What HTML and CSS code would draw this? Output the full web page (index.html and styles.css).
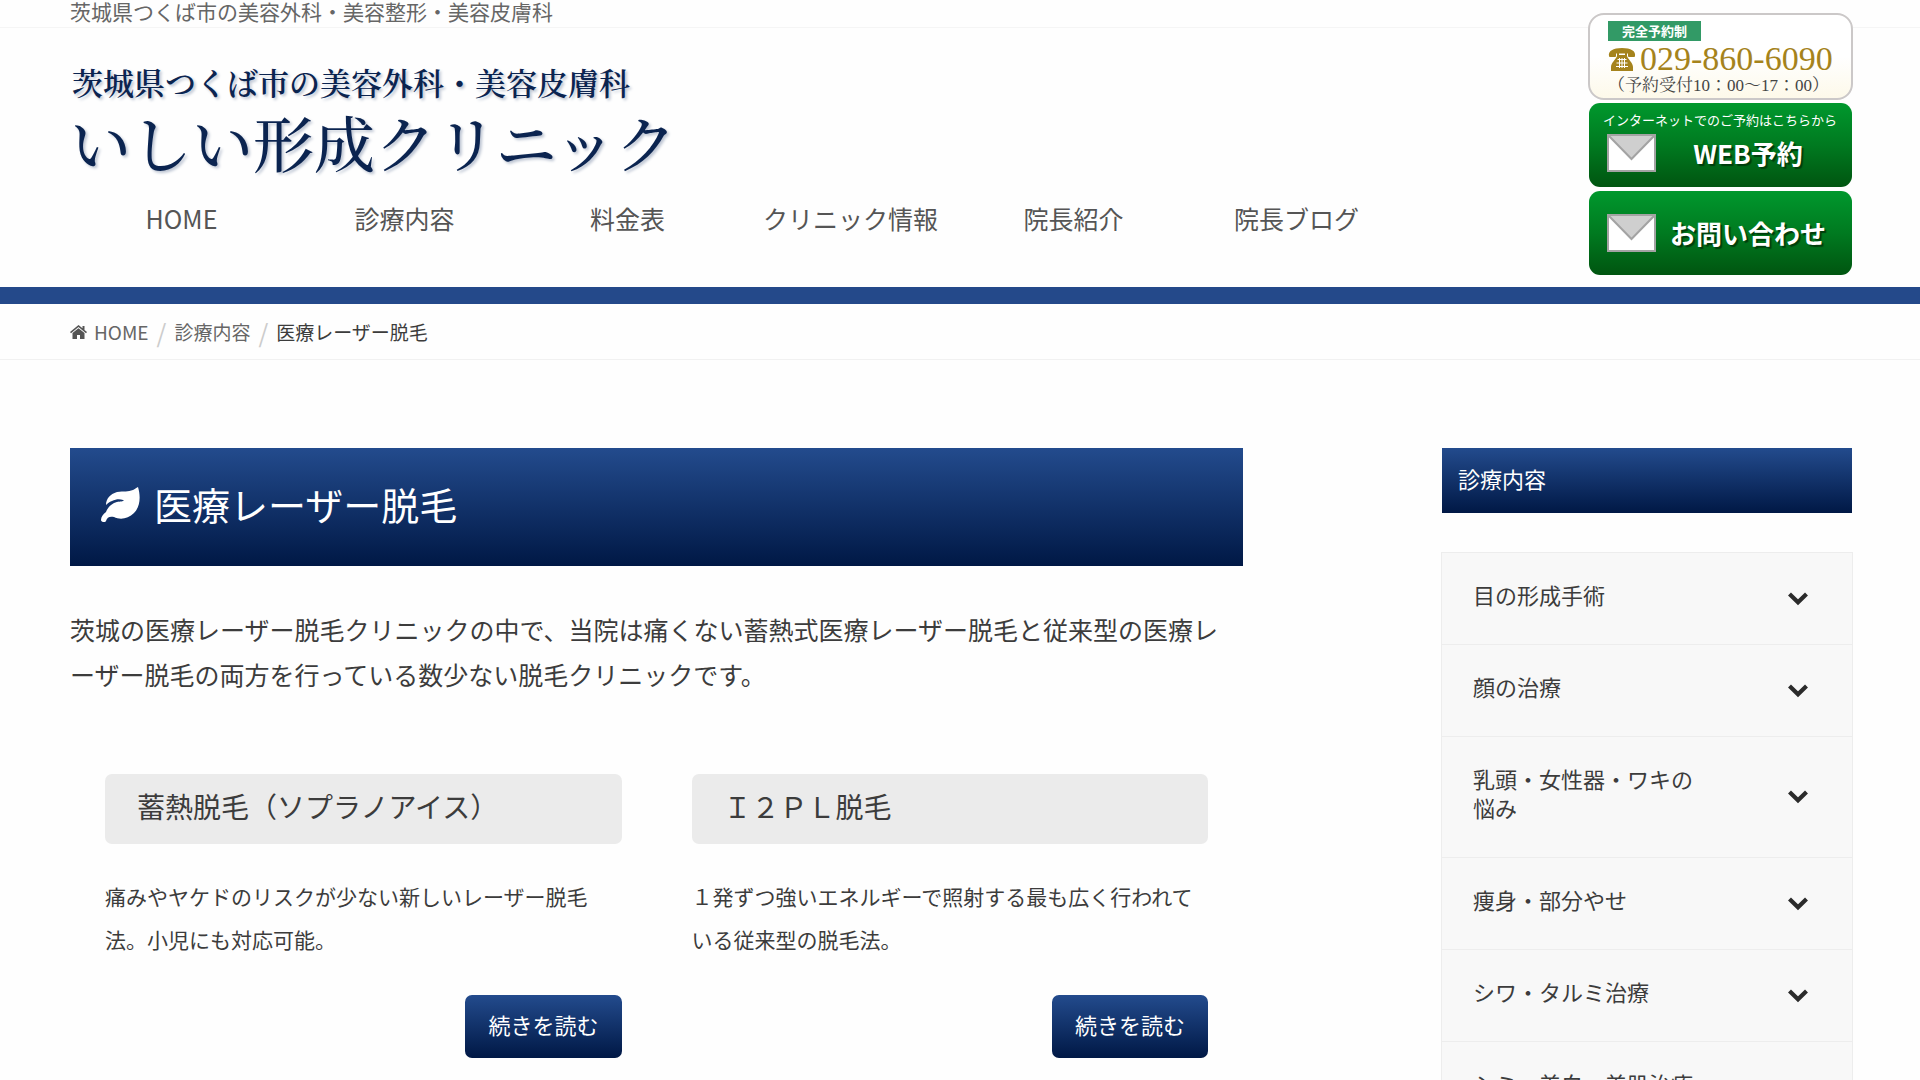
FILE: index.html
```html
<!DOCTYPE html>
<html lang="ja">
<head>
<meta charset="utf-8">
<meta name="viewport" content="width=device-width, initial-scale=1">
<title>医療レーザー脱毛 | いしい形成クリニック</title>
<link rel="stylesheet" href="styles.css">
</head>
<body>
<svg class="sprite" aria-hidden="true">
  <symbol id="chevron" viewBox="0 0 20 14"><path d="M1.500 2L10 10.300L18.500 2" fill="none" stroke="currentColor" stroke-width="4.200"/></symbol>
  <symbol id="envelope" viewBox="0 0 49 38"><rect x="1" y="1" width="47" height="36" fill="#fff" stroke="#a3a3a3" stroke-width="2"/><path d="M2 2H47L24.500 25z" fill="#cfcfcf"/><path d="M2 2L24.500 25L47 2" fill="none" stroke="#a3a3a3" stroke-width="2"/></symbol>
</svg>
<header class="site-header">
  <p class="tagline">茨城県つくば市の美容外科・美容整形・美容皮膚科</p>
  <div class="masthead">
    <a class="logo" href="#">
      <span class="logo-lead">茨城県つくば市の美容外科・美容皮膚科</span>
      <span class="logo-name">いしい形成クリニック</span>
    </a>
    <nav class="global-nav">
      <a href="#">HOME</a>
      <a href="#">診療内容</a>
      <a href="#">料金表</a>
      <a href="#">クリニック情報</a>
      <a href="#">院長紹介</a>
      <a href="#">院長ブログ</a>
    </nav>
  </div>
  <div class="contact">
    <a class="phone" href="tel:029-860-6090">
      <span class="phone-badge">完全予約制</span>
      <span class="phone-number">
        <svg width="28" height="23" viewBox="0 0 28 23" aria-hidden="true"><path d="M1 8C0 3 5 0 14 0s14 3 13 8c0 1-1 1-2 1h-3c-1 0-2 0-2-1V5.500H8V8c0 1-1 1-2 1H3C2 9 1 9 1 8z" fill="#a5831c"/><path d="M9 4h2v3h6V4h2v4c1 3 6 7 6 11v4H3v-4c0-4 5-8 6-11z" fill="#a5831c"/><path d="M9.500 11.500h9M8.500 15h11M8 18.500h12M11.500 10v10M14 10v10M16.500 10v10" stroke="#fff" fill="none"/></svg>
        029-860-6090
      </span>
      <span class="phone-hours">（予約受付10：00～17：00）</span>
    </a>
    <a class="banner" href="#">
      <span class="banner-note">インターネットでのご予約はこちらから</span>
      <span class="banner-label"><svg width="49" height="38" aria-hidden="true"><use href="#envelope"/></svg><span class="banner-text">WEB予約</span></span>
    </a>
    <a class="banner" href="#">
      <span class="banner-label"><svg width="49" height="38" aria-hidden="true"><use href="#envelope"/></svg><span class="banner-text">お問い合わせ</span></span>
    </a>
  </div>
</header>
<nav class="breadcrumb" aria-label="パンくず">
  <a href="#"><svg width="17" height="14" viewBox="0 0 17 14" aria-hidden="true"><path d="M8.500 0L0 7l1 1.200L8.500 2l7.500 6.200L17 7l-2.500-2V1h-2v2.300z"/><path d="M8.500 3.200L2.500 8v6H7v-4h3v4h4.500V8z"/></svg>HOME</a>
  <a href="#">診療内容</a>
  <span aria-current="page">医療レーザー脱毛</span>
</nav>
<div class="content">
  <main>
    <h1 class="page-title">
      <svg width="40" height="35" viewBox="0 0 40 35" aria-hidden="true"><path d="M38 0c3 10 2 20-4 26-6 6-14 7-20 4-4-1-7 0-8 4-1 2-5 1-5-1 0-3 2-6 5-8 1-3 4-7 8-9 4-2 7-1 9-2 1 0 1-1 0-1-3-1-7-1-11 1-3 1-4 2-6 4 0-6 4-11 11-13 7-1 11 0 16-2 2-1 3-2 5-3z" fill="#fff"/></svg>
      医療レーザー脱毛
    </h1>
    <p class="lead">茨城の医療レーザー脱毛クリニックの中で、当院は痛くない蓄熱式医療レーザー脱毛と従来型の医療レーザー脱毛の両方を行っている数少ない脱毛クリニックです。</p>
    <div class="cards">
      <section class="card">
        <h2>蓄熱脱毛（ソプラノアイス）</h2>
        <p>痛みやヤケドのリスクが少ない新しいレーザー脱毛法。小児にも対応可能。</p>
        <a class="more" href="#">続きを読む</a>
      </section>
      <section class="card">
        <h2>Ｉ２ＰＬ脱毛</h2>
        <p>１発ずつ強いエネルギーで照射する最も広く行われている従来型の脱毛法。</p>
        <a class="more" href="#">続きを読む</a>
      </section>
    </div>
  </main>
  <aside>
    <h2 class="side-title">診療内容</h2>
    <ul class="side-menu">
      <li><button type="button"><span>目の形成手術</span><svg width="20" height="14" aria-hidden="true"><use href="#chevron"/></svg></button></li>
      <li><button type="button"><span>顔の治療</span><svg width="20" height="14" aria-hidden="true"><use href="#chevron"/></svg></button></li>
      <li><button type="button"><span>乳頭・女性器・ワキの悩み</span><svg width="20" height="14" aria-hidden="true"><use href="#chevron"/></svg></button></li>
      <li><button type="button"><span>痩身・部分やせ</span><svg width="20" height="14" aria-hidden="true"><use href="#chevron"/></svg></button></li>
      <li><button type="button"><span>シワ・タルミ治療</span><svg width="20" height="14" aria-hidden="true"><use href="#chevron"/></svg></button></li>
      <li><button type="button"><span>シミ・美白・美肌治療</span><svg width="20" height="14" aria-hidden="true"><use href="#chevron"/></svg></button></li>
    </ul>
  </aside>
</div>
</body>
</html>
```
FILE: styles.css
```css
* {
  box-sizing: border-box;
}

body {
  margin: 0;
  background: #fefefe;
  color: #3c3c3c;
  font-family: "Noto Sans CJK JP", sans-serif;
  font-size: 21px;
}

a {
  color: inherit;
  text-decoration: none;
}

h1, h2, p, ul {
  margin: 0;
  padding: 0;
  font-weight: 400;
}

.sprite {
  position: absolute;
  width: 0;
  height: 0;
}

/* Header */
.site-header {
  position: relative;
  border-bottom: 17px solid #24498a;
}

.tagline {
  padding: 0 67px 5px 70px;
  border-bottom: 1px solid #f5f5f5;
  color: #666;
  line-height: 22px;
}

.masthead {
  padding: 34px 332px 54px 70px;
}

.logo {
  display: flex;
  flex-direction: column;
  color: #0b2450;
  font-family: "Noto Serif CJK JP", "Noto Sans CJK JP", serif;
  text-shadow: 2px 2px 3px #bcc4d2;
}

.logo-lead {
  padding-left: 2px;
  font-size: 31px;
  font-weight: 600;
  line-height: 40px;
}

.logo-name {
  font-size: 61px;
  font-weight: 500;
  line-height: 80px;
}

.global-nav {
  display: grid;
  grid-template-columns: repeat(6, 1fr);
  max-width: 1338px;
  margin-top: 21px;
  color: #555;
  font-size: 25px;
  line-height: 30px;
  text-align: center;
}

.contact {
  position: absolute;
  top: 13px;
  right: 67px;
  display: flex;
  flex-direction: column;
  gap: 3px;
  width: 265px;
}

.phone {
  display: flex;
  flex-direction: column;
  align-items: flex-start;
  height: 87px;
  padding: 6px 18px;
  border: 2px solid #cbc8c8;
  border-radius: 16px;
  background: linear-gradient(#fff 50%, #fdf9ea);
  white-space: nowrap;
}

.phone-badge {
  padding: 0 14px;
  background: #329a66;
  color: #fff;
  font-size: 13px;
  font-weight: 700;
  line-height: 20px;
}

.phone-number {
  display: flex;
  align-items: center;
  gap: 4px;
  color: #a5831c;
  font-family: "Liberation Serif", serif;
  font-size: 34px;
  line-height: 36px;
}

.phone-hours {
  color: #444;
  font-family: "Liberation Serif", "Noto Serif CJK JP", serif;
  font-size: 17px;
  line-height: 18px;
}

.banner {
  display: flex;
  flex-direction: column;
  justify-content: center;
  height: 84px;
  margin: 0 1px;
  padding: 0 18px;
  border-radius: 11px;
  background: linear-gradient(#00982d, #007a20 50%, #005510);
  color: #fff;
}

.banner + .banner {
  margin-top: 1px;
}

.banner-note {
  margin: 0 -4px 4px;
  font-size: 13px;
  line-height: 20px;
  white-space: nowrap;
}

.banner-note + .banner-label {
  margin-bottom: 8px;
}

.banner-label {
  display: flex;
  align-items: center;
  gap: 14px;
}

.banner-text {
  width: 156px;
  font-size: 26px;
  font-weight: 700;
  line-height: 36px;
  text-align: center;
  text-shadow: 2px 2px 1px #003d0c;
  white-space: nowrap;
}

/* Breadcrumb */
.breadcrumb {
  display: flex;
  padding: 14px 67px 13px 70px;
  border-bottom: 1px solid #f1f1f1;
  font-size: 19px;
  line-height: 28px;
}

.breadcrumb a {
  display: flex;
  align-items: center;
  color: #666;
}

.breadcrumb a::after {
  content: "/";
  margin: 0 8px;
  color: #ccc;
  font-size: 25px;
}

.breadcrumb svg {
  margin-right: 7px;
  fill: #555;
}

/* Two-column body */
.content {
  display: grid;
  grid-template-columns: minmax(0, 1fr) 412px;
  gap: 198px;
  padding: 88px 67px 60px 70px;
}

.page-title,
.side-title,
.more {
  background: linear-gradient(#234b8d, #001845);
  color: #fff;
}

.page-title {
  display: flex;
  align-items: center;
  gap: 14px;
  padding: 28px 30px 34px;
  font-size: 38px;
  line-height: 56px;
}

.lead {
  margin-top: 41px;
  font-size: 25px;
  line-height: 45px;
}

.cards {
  display: grid;
  grid-template-columns: 1fr 1fr;
  gap: 70px;
  margin-top: 77px;
  padding: 0 35px;
}

.card {
  display: flex;
  flex-direction: column;
}

.card h2 {
  padding: 12px 32px 18px;
  border-radius: 7px;
  background: #ebebeb;
  font-size: 28px;
  line-height: 40px;
}

.card p {
  margin: 31px 0 34px;
  line-height: 43px;
}

.more {
  align-self: flex-end;
  padding: 13px 23px 18px;
  border-radius: 7px;
  font-size: 22px;
  line-height: 32px;
}

/* Sidebar */
.side-title {
  margin: 0 1px 39px;
  padding: 14px 16px 19px;
  font-size: 22px;
  line-height: 32px;
}

.side-menu {
  border: 1px solid #ededed;
  border-bottom: 0;
  background: #f8f8f8;
  list-style: none;
}

.side-menu button {
  display: flex;
  align-items: center;
  justify-content: space-between;
  width: 100%;
  padding: 27px 44px 35px 31px;
  border: 0;
  border-bottom: 1px solid #ededed;
  background: none;
  color: inherit;
  font: inherit;
  font-size: 22px;
  line-height: 29px;
  text-align: left;
}

.side-menu span {
  max-width: 230px;
}

.side-menu svg {
  margin-top: 8px;
  color: #2b2b2b;
}
```
